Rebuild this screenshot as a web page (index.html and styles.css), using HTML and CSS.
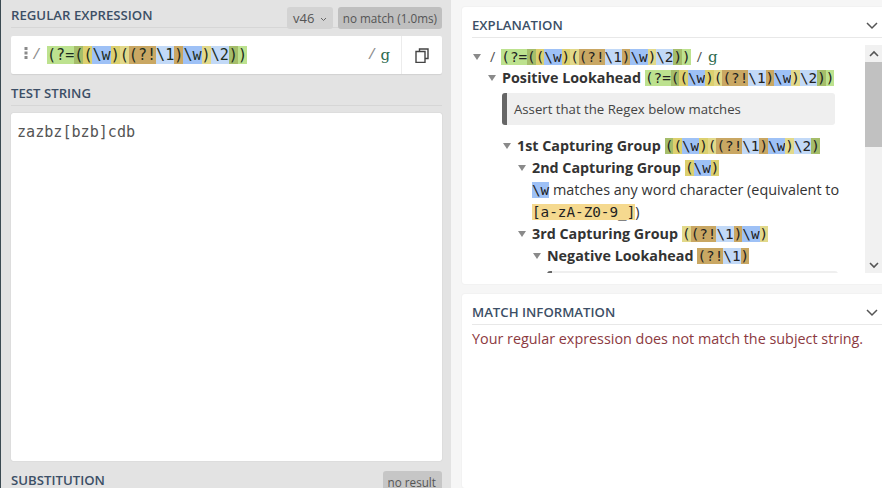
FILE: index.html
```html
<!DOCTYPE html>
<html lang="en">
<head>
<meta charset="utf-8">
<title>Regex</title>
<link rel="stylesheet" href="styles.css">
</head>
<body>
<div class="app">
  <section class="left">
    <div class="head head-regex">
      <h2 class="title">REGULAR EXPRESSION</h2>
      <div class="pills">
        <span class="pill">v46 <svg class="mini" width="7" height="5" viewBox="0 0 7 5"><path d="M1 1l2.500 2.500L6 1" fill="none" stroke="#666" stroke-width="1"/></svg></span>
        <span class="pill">no match (1.0ms)</span>
      </div>
    </div>
    <div class="regex-box">
      <div class="regex-main">
        <svg class="grip" width="4" height="12" viewBox="0 0 4 12"><g fill="#8a8a8a"><rect x="0.5" y="0" width="3" height="3"/><rect x="0.5" y="4.5" width="3" height="3"/><rect x="0.5" y="9" width="3" height="3"/></g></svg>
        <span class="delim">/</span>
        <code class="rx rx-big"><span class="c-la">(?=</span><span class="c-g1">(</span><span class="c-g2">(</span><span class="c-w">\w</span><span class="c-g2">)</span><span class="c-g3">(</span><span class="c-nl">(?!</span><span class="c-b">\1</span><span class="c-nl">)</span><span class="c-w">\w</span><span class="c-g3">)</span><span class="c-b">\2</span><span class="c-g1">)</span><span class="c-la">)</span></code>
        <span class="flags"><span class="delim">/</span><span class="flag">g</span></span>
      </div>
      <button class="copy"><svg width="14" height="15" viewBox="0 0 14 15"><path d="M4.500 3.500V1h8.500v9.500H10M1 3.500h9v11H1z" fill="none" stroke="#444" stroke-width="1.400"/></svg></button>
    </div>
    <div class="head head-test"><h2 class="title">TEST STRING</h2></div>
    <div class="test-box">zazbz[bzb]cdb</div>
    <div class="head-sub">
      <h2 class="title">SUBSTITUTION</h2>
      <span class="pill pill-result">no result</span>
    </div>
  </section>
  <section class="right">
    <div class="card card-exp">
      <div class="card-head">
        <h2 class="title">EXPLANATION</h2>
        <svg class="chev" width="14" height="9" viewBox="0 0 14 9"><path d="M2 2l5 5 5-5" fill="none" stroke="#555" stroke-width="1.500"/></svg>
      </div>
      <div class="tree-wrap">
        <div class="tree">
          <div class="row row-root"><i class="tri"></i><span class="delim2">/</span> <code class="rx"><span class="c-la">(?=</span><span class="c-g1">(</span><span class="c-g2">(</span><span class="c-w">\w</span><span class="c-g2">)</span><span class="c-g3">(</span><span class="c-nl">(?!</span><span class="c-b">\1</span><span class="c-nl">)</span><span class="c-w">\w</span><span class="c-g3">)</span><span class="c-b">\2</span><span class="c-g1">)</span><span class="c-la">)</span></code> <span class="delim2">/</span> <span class="flag flag-sm">g</span></div>
          <div class="row lvl1"><i class="tri"></i><b>Positive Lookahead</b> <code class="rx"><span class="c-la">(?=</span><span class="c-g1">(</span><span class="c-g2">(</span><span class="c-w">\w</span><span class="c-g2">)</span><span class="c-g3">(</span><span class="c-nl">(?!</span><span class="c-b">\1</span><span class="c-nl">)</span><span class="c-w">\w</span><span class="c-g3">)</span><span class="c-b">\2</span><span class="c-g1">)</span><span class="c-la">)</span></code></div>
          <div class="note">Assert that the Regex below matches</div>
          <div class="row lvl2"><i class="tri"></i><b>1st Capturing Group</b> <code class="rx"><span class="c-g1">(</span><span class="c-g2">(</span><span class="c-w">\w</span><span class="c-g2">)</span><span class="c-g3">(</span><span class="c-nl">(?!</span><span class="c-b">\1</span><span class="c-nl">)</span><span class="c-w">\w</span><span class="c-g3">)</span><span class="c-b">\2</span><span class="c-g1">)</span></code></div>
          <div class="row lvl3"><i class="tri"></i><b>2nd Capturing Group</b> <code class="rx"><span class="c-g2">(</span><span class="c-w">\w</span><span class="c-g2">)</span></code></div>
          <div class="row lvl3b"><code class="rx"><span class="c-w">\w</span></code> matches any word character (equivalent to</div>
          <div class="row lvl3b"><code class="rx"><span class="c-set">[a-zA-Z0-9_]</span></code>)</div>
          <div class="row lvl3"><i class="tri"></i><b>3rd Capturing Group</b> <code class="rx"><span class="c-g3">(</span><span class="c-nl">(?!</span><span class="c-b">\1</span><span class="c-nl">)</span><span class="c-w">\w</span><span class="c-g3">)</span></code></div>
          <div class="row lvl4"><i class="tri"></i><b>Negative Lookahead</b> <code class="rx"><span class="c-nl">(?!</span><span class="c-b">\1</span><span class="c-nl">)</span></code></div>
          <div class="note note-clip"></div>
        </div>
        <div class="scroll">
          <svg class="arrow" width="12" height="8" viewBox="0 0 12 8"><path d="M2 6l4-4 4 4" fill="none" stroke="#555" stroke-width="1.600"/></svg>
          <div class="thumb"></div>
          <div class="track"></div>
          <svg class="arrow" width="12" height="8" viewBox="0 0 12 8"><path d="M2 2l4 4 4-4" fill="none" stroke="#555" stroke-width="1.600"/></svg>
        </div>
      </div>
    </div>
    <div class="card card-match">
      <div class="card-head card-head-match">
        <h2 class="title">MATCH INFORMATION</h2>
        <svg class="chev" width="14" height="9" viewBox="0 0 14 9"><path d="M2 2l5 5 5-5" fill="none" stroke="#555" stroke-width="1.500"/></svg>
      </div>
      <p class="nomatch">Your regular expression does not match the subject string.</p>
    </div>
  </section>
</div>
</body>
</html>
```
FILE: styles.css
```css
* { box-sizing: border-box; }
html, body { margin: 0; height: 100%; overflow: hidden; }
body { font-family: "Open Sans", sans-serif; color: #333; background: #f6f6f6; }
.app { display: flex; width: 882px; height: 488px; overflow: hidden; }
.left {
  width: 451px; flex: none; height: 488px; background: #e3e3e3;
  border-left: 1px solid #3b4a52; padding: 0 9px 0 10px; overflow: hidden;
}
.right { flex: 1; min-width: 0; padding: 7px 0 0 11px; display: flex; flex-direction: column; gap: 10px; }
.title { margin: 0; font-size: 13.2px; font-weight: 600; line-height: 18px; color: #3c4f66; }
.head { display: flex; justify-content: space-between; align-items: flex-start; border-bottom: 1px solid #d6d6d6; }
.head-regex { height: 28px; padding-top: 6px; }
.pills { display: flex; gap: 5px; margin-top: 1px; }
.pill {
  height: 22px; padding: 0 5px; border-radius: 3px; background: #c8c8c8; color: #555;
  font-size: 11.7px; line-height: 23px; white-space: nowrap;
}
.pills .pill:first-child { background: #d3d3d3; padding: 0 6px; font-size: 13px; }
.pills .pill + .pill { background: #bfbfbf; }
.mini { vertical-align: 1px; margin-left: 2px; }
.regex-box {
  margin-top: 8px; height: 38px; background: #fff; border-radius: 2px; display: flex;
  box-shadow: 0 1px 1px rgba(0,0,0,.08);
}
.regex-main { flex: 1; display: flex; align-items: center; padding: 0 11px 0 13px; }
.grip { margin-top: -4px; margin-right: 4px; }
.delim { font-family: "Liberation Mono", monospace; font-size: 15px; color: #8d8d8d; margin-right: 6px; }
.flags { margin-left: auto; display: flex; align-items: center; }
.flags .delim { margin-right: 4px; }
.flag { font-family: "DejaVu Serif", serif; color: #2e6b4f; font-size: 15px; }
.rx { font-family: "DejaVu Sans Mono", monospace; font-size: 14.3px; line-height: 20px; color: #222; display: inline-block; white-space: pre; }
.rx-big { font-size: 15.1px; color: #1c2c20; }
.copy { width: 41px; border: 0; border-left: 1px solid #ececec; background: none; padding: 0; display: flex; align-items: center; justify-content: center; }
.head-test { margin-top: 8px; height: 24px; padding-top: 2px; }
.test-box {
  margin-top: 7px; height: 348px; background: #fff; border-radius: 2px; padding: 9px 6px;
  font-family: "DejaVu Sans Mono", monospace; font-size: 15.1px; line-height: 20px; color: #555;
  box-shadow: 0 0 1px rgba(0,0,0,.25);
}
.head-sub { display: flex; justify-content: space-between; align-items: flex-start; margin-top: 9px; }
.head-sub .title { line-height: 20px; }
.pill-result { background: #c6c6c6; margin-top: 1px; padding: 0 6px 0 5px; }
.card { background: #fff; border-radius: 3px 0 0 3px; padding: 0 0 0 10px; box-shadow: 0 0 2px rgba(0,0,0,.07); }
.card-exp { height: 277px; flex: none; }
.card-match { flex: 1; }
.card-head { height: 31px; padding-top: 6px; display: flex; justify-content: space-between; align-items: center; border-bottom: 1px solid #e8e8e8; }
.card-head .chev { margin-right: 3px; }
.tree-wrap { display: flex; height: 228px; margin-top: 7px; overflow: hidden; }
.tree { flex: 1; min-width: 0; font-size: 14.4px; overflow: hidden; color: #333; }
.tree b { font-weight: 700; font-size: 14.3px; color: #333; }
.row { height: 22px; line-height: 22px; white-space: nowrap; display: flex; align-items: center; }
.row-root { padding-top: 1px; }
.row > b, .row > .rx { flex: none; }
.row b { margin-right: 4px; }
.tri { width: 0; height: 0; border-left: 4px solid transparent; border-right: 4px solid transparent; border-top: 6px solid #8a8a8a; margin: 0 6px 0 1px; flex: none; }
.row-root > .delim2:first-of-type { margin-left: 3px; }
.delim2 { color: #555; margin-right: 6px; }
.rx + .delim2 { margin-left: 6px; }
.flag-sm { font-size: 15px; }
.lvl1 { padding-left: 15px; }
.lvl2 { padding-left: 30px; }
.lvl3 { padding-left: 45px; }
.lvl3b { padding-left: 60px; white-space: pre; }
.lvl4 { padding-left: 60px; }
.note {
  margin: 4px 0 10px 30px; width: 333px; height: 32px; background: #efefef; border-left: 5px solid #666;
  border-radius: 3px; font-size: 13.2px; line-height: 32px; padding-left: 7px; color: #444;
}
.note-clip { margin: 4px 0 0 75px; width: 291px; }
.scroll { width: 17px; flex: none; background: #f1f1f1; display: flex; flex-direction: column; align-items: center; }
.arrow { flex: none; margin: 5px 0 4px; }
.thumb { width: 100%; height: 85px; background: #c1c1c1; }
.track { flex: 1; }
.nomatch { margin: 3px 0 0; font-size: 14.37px; line-height: 22px; color: #8c3a3f; white-space: nowrap; }
.c-la { background: #bde28f; }
.c-g1 { background: #a5bd6a; }
.c-g2 { background: #dcd06f; }
.c-g3 { background: #e2d98a; }
.c-nl { background: #c9a763; }
.c-w { background: #9ec1f6; }
.c-b { background: #c2d9f7; }
.c-set { background: #f5d98f; }
```
